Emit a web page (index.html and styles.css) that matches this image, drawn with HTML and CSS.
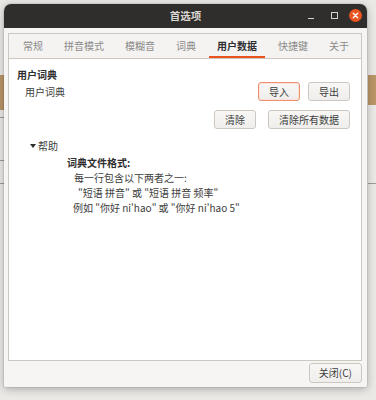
FILE: index.html
```html
<!DOCTYPE html>
<html lang="zh">
<head>
<meta charset="utf-8">
<title>首选项</title>
<link rel="stylesheet" href="styles.css">
</head>
<body>
<div class="window">
  <div class="titlebar">
    <div></div>
    <div class="title">首选项</div>
    <div class="controls">
      <span class="ctl-min"></span>
      <span class="ctl-max"></span>
      <span class="ctl-close">
        <svg width="13" height="13" viewBox="0 0 13 13"><path d="M4.3 4.3 L8.7 8.7 M8.7 4.3 L4.3 8.7" stroke="#fff" stroke-width="1.3" stroke-linecap="round" fill="none"/></svg>
      </span>
    </div>
  </div>
  <div class="client">
    <div class="notebook">
      <div class="tabs">
        <div class="tab">常规</div>
        <div class="tab">拼音模式</div>
        <div class="tab">模糊音</div>
        <div class="tab">词典</div>
        <div class="tab active">用户数据</div>
        <div class="tab">快捷键</div>
        <div class="tab">关于</div>
      </div>
      <div class="page">
        <div class="section-title">用户词典</div>
        <div class="row">
          <span class="label">用户词典</span>
          <button class="btn focused">导入</button>
          <button class="btn gap8">导出</button>
        </div>
        <div class="row row-end">
          <button class="btn">清除</button>
          <button class="btn gap12">清除所有数据</button>
        </div>
        <div class="expander"><span class="arrow"></span>帮助</div>
        <div class="help">
          <div class="help-title">词典文件格式:</div>
          <div class="help-line l2">每一行包含以下两者之一:</div>
          <div class="help-line l3">"短语 拼音" 或 "短语 拼音 频率"</div>
          <div class="help-line l4">例如 "你好 ni'hao" 或 "你好 ni'hao 5"</div>
        </div>
      </div>
    </div>
    <div class="actions">
      <button class="btn btn-close">关闭(C)</button>
    </div>
  </div>
</div>
</body>
</html>
```
FILE: styles.css
```css
html, body {
  margin: 0;
  padding: 0;
}
body {
  width: 376px;
  height: 400px;
  overflow: hidden;
  font-family: "Noto Sans CJK SC", "Noto Sans", sans-serif;
  font-size: 10px;
  color: #3d3d3d;
  background:
    linear-gradient(#b99567, #b99567) 0 75px / 4px 35px no-repeat,
    linear-gradient(#b99567, #b99567) 368px 75px / 8px 30px no-repeat,
    linear-gradient(#a09a94, #a09a94) 0 117px / 4px 1px no-repeat,
    linear-gradient(#a09a94, #a09a94) 0 160px / 4px 1px no-repeat,
    linear-gradient(#a09a94, #a09a94) 0 183px / 4px 1px no-repeat,
    linear-gradient(#a09a94, #a09a94) 368px 183px / 8px 1px no-repeat,
    #ebe9e6;
  padding: 4px 0 0 4px;
  box-sizing: border-box;
}
.window {
  width: 363px;
  height: 383px;
  border-radius: 7px 7px 2px 2px;
  box-shadow: 0 2px 8px rgba(0, 0, 0, 0.28), 0 0 0 1px rgba(0, 0, 0, 0.06);
  display: flex;
  flex-direction: column;
  overflow: hidden;
}
.titlebar {
  height: 24px;
  flex: none;
  background: #2f2e2d;
  display: grid;
  grid-template-columns: 1fr auto 1fr;
  align-items: center;
}
.title {
  color: #dcd9d4;
  font-weight: bold;
  font-size: 10.5px;
  line-height: 24px;
}
.controls {
  justify-self: end;
  display: flex;
  align-items: center;
  padding-right: 5px;
  height: 24px;
}
.ctl-min {
  width: 6px;
  height: 1px;
  background: #d6d3ce;
  margin-top: 5px;
}
.ctl-max {
  width: 5px;
  height: 5px;
  border: 1px solid #d6d3ce;
  margin-left: 17px;
  margin-top: -1px;
}
.ctl-close {
  width: 13px;
  height: 13px;
  border-radius: 50%;
  background: #e95420;
  margin-left: 11px;
  margin-top: -1px;
  display: flex;
}
.client {
  flex: 1;
  background: #f6f5f4;
  padding: 5px 5px 0 4px;
  display: flex;
  flex-direction: column;
}
.notebook {
  height: 328px;
  box-sizing: border-box;
  border: 1px solid #cdc7c2;
  display: flex;
  flex-direction: column;
  background: #ffffff;
}
.tabs {
  height: 25px;
  box-sizing: border-box;
  border-bottom: 1px solid #cdc7c2;
  background: #f4f3f2;
  display: flex;
  gap: 5px;
  padding-left: 6px;
  flex: none;
}
.tab {
  padding: 0 8px;
  height: 24px;
  box-sizing: border-box;
  line-height: 24px;
  color: #8b8a88;
  border-bottom: 2px solid transparent;
}
.tab.active {
  color: #2e2e2e;
  font-weight: bold;
  border-bottom-color: #e95420;
}
.page {
  flex: 1;
  padding: 9px 11px 0 8px;
  line-height: 14px;
}
.section-title {
  font-weight: bold;
  color: #2e2e2e;
  line-height: 14px;
}
.row {
  display: flex;
  align-items: center;
  height: 19px;
}
.row-end {
  justify-content: flex-end;
  margin-top: 9px;
}
.label {
  padding-left: 8px;
  flex: 1;
  margin-top: 1px;
}
.btn {
  height: 19px;
  box-sizing: border-box;
  padding: 0 10px;
  border: 1px solid #cdc7c2;
  border-radius: 3px;
  background: linear-gradient(#f8f7f6, #efeeed);
  font-family: "Noto Sans CJK SC", "Noto Sans", sans-serif;
  font-size: 10px;
  color: #3d3d3d;
  line-height: 17px;
  margin: 0;
}
.btn.focused {
  border-color: #eb8f70;
  box-shadow: inset 0 0 0 1px #fbe3da;
}
.gap8 {
  margin-left: 8px;
}
.gap12 {
  margin-left: 12px;
}
.expander {
  margin-top: 10px;
  padding-left: 13px;
  display: flex;
  align-items: center;
  line-height: 14px;
}
.arrow {
  width: 0;
  height: 0;
  border-left: 3px solid transparent;
  border-right: 3px solid transparent;
  border-top: 4px solid #2e2e2e;
  margin-right: 2px;
}
.help {
  margin-top: 2px;
  line-height: 15px;
}
.help-title {
  font-weight: bold;
  color: #2e2e2e;
  padding-left: 50px;
}
.help-line.l2 {
  padding-left: 57px;
}
.help-line.l3 {
  padding-left: 61px;
}
.help-line.l4 {
  padding-left: 56px;
}
.actions {
  display: flex;
  justify-content: flex-end;
  padding-top: 2px;
}
.btn-close {
  height: 20px;
  padding: 0 9px;
  line-height: 18px;
}
```
